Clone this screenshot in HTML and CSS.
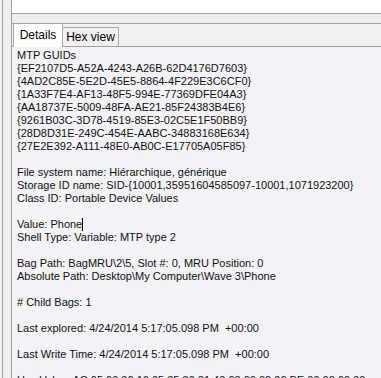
FILE: index.html
```html
<!DOCTYPE html>
<html lang="en">
<head>
    <meta charset="UTF-8">
    <title>Shellbag details</title>
    <link rel="stylesheet" href="styles.css">
</head>
<body>
    <div id="window">
        <div id="splitter"><div class="grip"></div></div>
        <div id="main">
            <div id="top-box"></div>
            <div id="top-gap"></div>
            <!-- Tabs -->
            <div id="tabs">
                <div class="tab active">Details</div>
                <div class="tab">Hex view</div>
            </div>
            <div id="details">
                <div class="line">MTP GUIDs</div>
                <div class="line">{EF2107D5-A52A-4243-A26B-62D4176D7603}</div>
                <div class="line">{4AD2C85E-5E2D-45E5-8864-4F229E3C6CF0}</div>
                <div class="line">{1A33F7E4-AF13-48F5-994E-77369DFE04A3}</div>
                <div class="line">{AA18737E-5009-48FA-AE21-85F24383B4E6}</div>
                <div class="line">{9261B03C-3D78-4519-85E3-02C5E1F50BB9}</div>
                <div class="line">{28D8D31E-249C-454E-AABC-34883168E634}</div>
                <div class="line">{27E2E392-A111-48E0-AB0C-E17705A05F85}</div>
                <div class="line"></div>
                <div class="line">File system name: Hiérarchique, générique</div>
                <div class="line">Storage ID name: SID-{10001,35951604585097-10001,1071923200}</div>
                <div class="line">Class ID: Portable Device Values</div>
                <div class="line"></div>
                <div class="line">Value: Phone<span class="caret"></span></div>
                <div class="line">Shell Type: Variable: MTP type 2</div>
                <div class="line"></div>
                <div class="line">Bag Path: BagMRU\2\5, Slot #: 0, MRU Position: 0</div>
                <div class="line">Absolute Path: Desktop\My Computer\Wave 3\Phone</div>
                <div class="line"></div>
                <div class="line"># Child Bags: 1</div>
                <div class="line"></div>
                <div class="line">Last explored: 4/24/2014 5:17:05.098 PM  +00:00</div>
                <div class="line"></div>
                <div class="line">Last Write Time: 4/24/2014 5:17:05.098 PM  +00:00</div>
                <div class="line"></div>
                <div class="line">Hex Value: AC 05 00 00 16 05 35 30 31 40 00 00 00 00 BE 00 00 00 00</div>
            </div>
        </div>
    </div>
</body>
</html>
```

FILE: styles.css
```css
body {
    margin: 0;
    padding: 0;
    background-color: #f0f0f0;
    font-family: 'Liberation Sans', Arial, sans-serif;
    overflow: hidden;
}

#window {
    display: flex;
    height: 378px;
    overflow: hidden;
}

#splitter {
    width: 11px;
    flex-shrink: 0;
    background-color: #f0f0f0;
}

.grip {
    margin-left: 2px;
    width: 1px;
    height: 100%;
    background-color: #a8a8a8;
}

#main {
    flex: 1;
    display: flex;
    flex-direction: column;
    border-left: 1px solid #a0a0a0;
    min-width: 0;
}

#top-box {
    flex-shrink: 0;
    height: 13px;
    background-color: #fff;
    border-bottom: 1px solid #a0a0a0;
}

#top-gap {
    flex-shrink: 0;
    height: 9px;
    background-color: #eeeeee;
    border-bottom: 1px solid #a0a0a0;
}

#tabs {
    flex-shrink: 0;
    display: flex;
    align-items: flex-end;
    height: 22px;
    padding-left: 1px;
    border-bottom: 1px solid #a0a0a0;
    background-color: #f0f0f0;
}

.tab {
    box-sizing: border-box;
    font-size: 12px;
    color: #000;
    text-align: center;
    background-color: #f0f0f0;
    border-right: 1px solid #acacac;
    border-top: 1px solid #acacac;
    width: 56px;
    height: 19px;
    line-height: 18px;
}

.tab.active {
    background-color: #fff;
    border-left: 1px solid #acacac;
    border-top: none;
    width: 50px;
    height: 23px;
    line-height: 23px;
    margin-bottom: -1px;
    position: relative;
}

#details {
    flex: 1;
    min-height: 0;
    overflow: hidden;
    background-color: #f3f3f7;
    padding: 2px 0 0 5px;
    font-size: 11px;
    line-height: 13px;
    color: #111;
}

.line {
    height: 13px;
    white-space: pre;
}

.caret {
    display: inline-block;
    width: 1px;
    height: 13px;
    background-color: #000;
    vertical-align: top;
}
```
